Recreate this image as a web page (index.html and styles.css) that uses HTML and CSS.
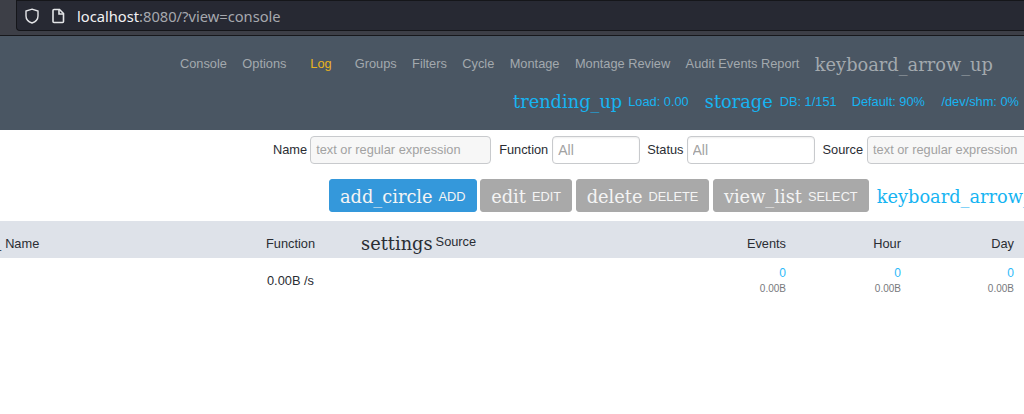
FILE: index.html
```html
<!DOCTYPE html>
<html lang="en">
<head>
    <meta charset="UTF-8">
    <meta name="viewport" content="width=device-width, initial-scale=1.0">
    <title>Console</title>
    <link rel="stylesheet" href="styles.css">
</head>
<body>
    <div class="browser-bar">
        <div class="url-box">
            <svg class="url-icon" width="16" height="16" viewBox="0 0 16 16" fill="none" stroke="#e4e5e8" stroke-width="1.4">
                <path d="M8 1.2 L14 3 V8 C14 11.5 11 14 8 15 C5 14 2 11.5 2 8 V3 Z"/>
            </svg>
            <svg class="url-icon page-icon" width="16" height="16" viewBox="0 0 16 16" fill="none" stroke="#e4e5e8" stroke-width="1.6">
                <path d="M3 2.5 C3 1.8 3.5 1.5 4 1.5 H9.5 L13.5 5.5 V13.5 C13.5 14.2 13 14.5 12.5 14.5 H4 C3.5 14.5 3 14.2 3 13.5 Z"/>
                <path d="M9 1.5 V6 H13.5"/>
            </svg>
            <span class="url-host">localhost</span><span class="url-rest">:8080/?view=console</span>
        </div>
    </div>

    <header class="top-nav">
        <nav class="nav-links">
            <a>Console</a>
            <a>Options</a>
            <a class="active">Log</a>
            <a>Groups</a>
            <a>Filters</a>
            <a>Cycle</a>
            <a>Montage</a>
            <a>Montage Review</a>
            <a>Audit Events Report</a>
            <span class="mi nav-toggle">keyboard_arrow_up</span>
        </nav>
        <div class="status-row">
            <span class="mi">trending_up</span>
            <span class="stat stat-load">Load: 0.00</span>
            <span class="mi mi-storage">storage</span>
            <span class="stat stat-db">DB: 1/151</span>
            <span class="stat stat-default">Default: 90%</span>
            <span class="stat">/dev/shm: 0%</span>
        </div>
    </header>

    <main>
        <form class="filters">
            <label for="f-name">Name</label>
            <input class="filter-text name" id="f-name" type="text" placeholder="text or regular expression">
            <label for="f-function">Function</label>
            <input class="filter-all fn" id="f-function" type="text" placeholder="All">
            <label for="f-status">Status</label>
            <input class="filter-all st" id="f-status" type="text" placeholder="All">
            <label for="f-source">Source</label>
            <input class="filter-text source" id="f-source" type="text" placeholder="text or regular expression">
        </form>

        <div class="actions">
            <button type="button" class="btn btn-add"><span class="mi">add_circle</span> <span class="btn-label">ADD</span></button>
            <button type="button" class="btn"><span class="mi">edit</span> <span class="btn-label">EDIT</span></button>
            <button type="button" class="btn"><span class="mi">delete</span> <span class="btn-label">DELETE</span></button>
            <button type="button" class="btn"><span class="mi">view_list</span> <span class="btn-label">SELECT</span></button>
            <span class="mi collapse">keyboard_arrow_up</span>
        </div>

        <div class="log-table">
            <div class="log-row log-head">
                <div class="col-name"><span class="clip-mark">_</span>Name</div>
                <div class="col-fn">Function</div>
                <div class="col-src"><span class="mi">settings</span><span class="src-label">Source</span></div>
                <div class="num">Events</div>
                <div class="num">Hour</div>
                <div class="num">Day</div>
            </div>
            <div class="log-row log-body">
                <div class="col-name"></div>
                <div class="col-fn">0.00B /s</div>
                <div class="col-src"></div>
                <div class="num"><a>0</a><small>0.00B</small></div>
                <div class="num"><a>0</a><small>0.00B</small></div>
                <div class="num"><a>0</a><small>0.00B</small></div>
            </div>
        </div>
    </main>
</body>
</html>
```

FILE: styles.css
```css
html, body { margin: 0; height: 100%; overflow: hidden; background: #fff; }
body { font-family: "Liberation Sans", Arial, sans-serif; font-size: 12.8px; color: #2a2d33; width: 1024px; height: 414px; }

/* browser chrome */
.browser-bar { height: 36px; box-sizing: border-box; padding-left: 16px; background: #3d3f47; border-bottom: 1px solid #17181c; }
.url-box { display: flex; align-items: center; height: 31px; box-sizing: border-box; padding-left: 7px; background: #272933; border: 1px solid #15161a; border-right: 0; border-radius: 0 0 0 4px; font-family: "Noto Sans", sans-serif; font-size: 14.7px; }
.url-icon { flex: none; }
.page-icon { margin-left: 10px; margin-right: 11px; }
.url-host { color: #f2f2f4; }
.url-rest { color: #a6a8ae; }

/* material icon font is missing so names show as serif text */
.mi { font-family: "DejaVu Serif", serif; font-size: 17.8px; font-weight: 400; white-space: nowrap; }

.top-nav { height: 94px; background: #4a5663; }
.nav-links { display: flex; align-items: center; height: 54px; padding-left: 180px; white-space: nowrap; }
.nav-links a { color: #a3a9ae; margin-right: 15.4px; }
.nav-links a.active { color: #e8b321; margin-left: 8.5px; margin-right: 23px; }
.nav-toggle { color: #a3a9ae; margin-top: 2px; }
.status-row { display: flex; align-items: center; height: 22px; padding-left: 513px; white-space: nowrap; color: #16b4f2; }
.stat-load { margin-left: 6px; }
.mi-storage { margin-left: 16px; }
.stat-db { margin-left: 7px; }
.stat-default { margin-left: 15px; }
.stat-default + .stat { margin-left: 16.5px; }

/* filter form */
.filters { display: flex; align-items: center; height: 40px; padding-left: 273px; white-space: nowrap; }
.filters label { margin-bottom: 2px; }
.filters input { flex: none; box-sizing: border-box; height: 28px; margin-left: 4px; padding: 0 5px; border: 1px solid #c8cacd; border-radius: 4px; font-family: inherit; font-size: 12.8px; color: #333; background: #fff; }
.filters input::placeholder { color: #a2a2a2; opacity: 1; }
.filters .filter-text { width: 181px; margin-right: 8px; padding-bottom: 2px; background: #f7f7f7; }
.filters .filter-all { width: 88px; margin-right: 7px; font-size: 14px; box-shadow: inset 0 1px 2px #eee; }
.filters .filter-all.st { width: 128px; margin-right: 8px; margin-left: 3px; }
.filters .name { margin-left: 3px; }
.filters .source { width: 170px; }

.actions { display: flex; align-items: center; height: 33px; padding-left: 329px; margin-top: 9px; white-space: nowrap; }
.btn { flex: none; display: flex; align-items: center; gap: 6px; height: 33px; padding: 2px 10px 0; margin-right: 3.6px; border: 1px solid #a9a9a9; border-radius: 3px; background: #a9a9a9; color: #f4f4f4; font-family: inherit; }
.btn-add { background: #3498db; border-color: #3498db; }
.btn-label { font-size: 12.8px; }
.collapse { color: #16b4f2; margin-left: 4.4px; margin-top: 2px; }

.log-table { margin-top: 9px; }
.log-row { display: grid; grid-template-columns: 266px 95px 307px 118px 115px 113px; }
.log-head { height: 37px; box-sizing: border-box; padding-top: 7px; align-items: center; background: #dee2e9; }
.log-body { padding-top: 7px; }
.col-name { white-space: nowrap; }
.clip-mark { margin-left: -6px; margin-right: 4px; }
.log-head .col-src { display: flex; align-items: center; }
.src-label { margin-left: 3px; margin-top: -4px; }
.log-body .col-fn { padding-top: 8px; padding-left: 1px; }
.num { text-align: right; }
.log-body a { display: block; color: #2cb9f9; font-size: 12px; line-height: 16px; }
.log-body small { display: block; margin-top: 1px; color: #77797d; font-size: 10px; line-height: 14px; }
```
